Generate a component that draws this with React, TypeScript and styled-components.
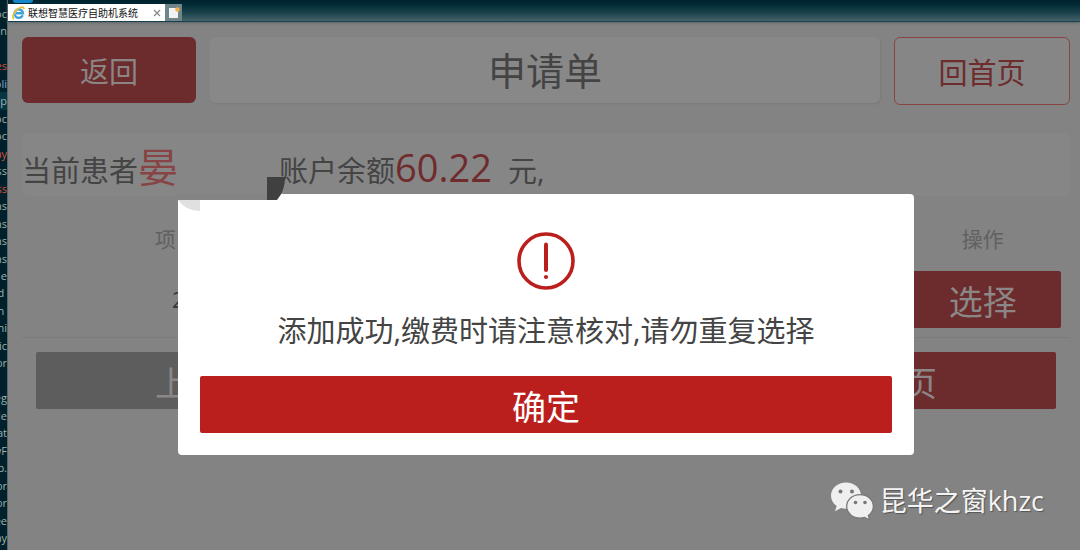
import React from 'react';
import styled, { createGlobalStyle } from 'styled-components';

const GlobalStyle = createGlobalStyle`
  *, *::before, *::after { box-sizing: border-box; }
  body {
    margin: 0;
    background: #002b36;
    font-family: "Open Sans", "Noto Sans CJK SC", sans-serif;
  }
  button { font: inherit; border: 0; padding: 0; cursor: pointer; }
`;

const Desktop = styled.div`
  display: grid;
  grid-template-columns: 7px minmax(0, 1fr);
  height: 100vh;
  overflow: hidden;
`;

const EditorStrip = styled.aside`
  display: flex;
  flex-direction: column;
  padding: 5px 0 3px;
  background: #00212b;
  overflow: hidden;
`;

const CodeLine = styled.div<{ $tone: string; $active: boolean }>`
  flex: 1;
  display: flex;
  align-items: center;
  justify-content: flex-end;
  font-size: 11px;
  line-height: 12px;
  white-space: pre;
  color: ${(p) => p.$tone};
  background: ${(p) => (p.$active ? '#063642' : 'transparent')};
`;

const Browser = styled.div`
  position: relative;
  display: flex;
  flex-direction: column;
  min-width: 0;
  background: #838383;
  border-left: 1px solid #56696d;
`;

const TabBar = styled.header`
  position: relative;
  display: flex;
  align-items: stretch;
  height: 22px;
  padding-top: 4px;
  background: linear-gradient(#00222c 0, #012c37 5px, #1d434d 13px, #44626a 21px);
  border-bottom: 1px solid #16414c;
  box-shadow: 0 1px 3px #5c6668;
`;

const TaskDot = styled.span`
  position: absolute;
  left: 5px;
  top: 0;
  width: 20px;
  height: 3px;
  border-radius: 0 0 8px 8px;
  background: #1387c9;
`;

const Tab = styled.div`
  display: flex;
  align-items: center;
  width: 157px;
  padding: 0 4px;
  background: #fff;
`;

const TabTitle = styled.span`
  flex: 1;
  padding-left: 3px;
  font-size: 10px;
  line-height: 16px;
  color: #111;
  white-space: nowrap;
`;

const TabIconButton = styled.button`
  display: grid;
  place-items: center;
  width: 8px;
  background: none;
`;

const NewTab = styled.button`
  display: grid;
  place-items: center;
  width: 17px;
  background: #70858a;
`;

const Page = styled.main`
  flex: 1;
  padding: 15px 10px 0 14px;
`;

const TopRow = styled.div`
  display: grid;
  grid-template-columns: 174px minmax(0, 1fr) 176px;
  column-gap: 14px;
  align-items: start;
`;

const ActionButton = styled.button<{ $outline?: boolean }>`
  height: ${(p) => (p.$outline ? 68 : 66)}px;
  padding-top: 4px;
  border-radius: 6px;
  font-size: 29px;
  line-height: 40px;
  color: ${(p) => (p.$outline ? '#6e2c2c' : '#8b8585')};
  background: ${(p) => (p.$outline ? '#868686' : '#6c2c2d')};
  border: ${(p) => (p.$outline ? '1px solid #8a4444' : '0')};
`;

const Title = styled.h1`
  margin: 0;
  height: 66px;
  border-radius: 6px;
  background: #888;
  box-shadow: 1px 1px 2px #7a7a7a;
  font-size: 38px;
  line-height: 66px;
  font-weight: 400;
  text-align: center;
  color: #444;
`;

const PatientBar = styled.section`
  display: flex;
  align-items: baseline;
  height: 63px;
  margin-top: 28px;
  border-radius: 6px;
  background: #868686;
  font-size: 29px;
  line-height: 68px;
  color: #444;
  white-space: nowrap;
`;

const PatientName = styled.span`
  width: 141px;
  font-size: 40px;
  color: #864444;
`;

const Balance = styled.span`
  padding-right: 16px;
  font-size: 38px;
  color: #702b2c;
`;

const Items = styled.table`
  width: 100%;
  margin-top: 21px;
  table-layout: fixed;
  border-collapse: collapse;
  border-bottom: 1px solid #7b7b7b;
`;

const HeadCell = styled.th<{ $span: string }>`
  width: ${(p) => p.$span};
  height: 44px;
  padding: 0;
  font-size: 21px;
  line-height: 28px;
  font-weight: 400;
  color: #616161;
`;

const Cell = styled.td<{ $inset: string }>`
  height: 76px;
  padding: 2px ${(p) => p.$inset} 0;
  font-size: 21px;
  line-height: 28px;
  color: #383838;
`;

const BlockButton = styled.button<{ $tone: 'dim' | 'grey' | 'bright' }>`
  display: block;
  width: 100%;
  height: 57px;
  padding-top: 6px;
  border-radius: 2px;
  font-size: 34px;
  line-height: 51px;
  color: ${(p) => (p.$tone === 'bright' ? '#fff' : '#8b8787')};
  background: ${(p) => ({ dim: '#6c2c2d', grey: '#5d5d5d', bright: '#bb1f1d' })[p.$tone]};
`;

const Pager = styled.nav`
  display: grid;
  grid-template-columns: repeat(3, minmax(0, 1fr));
  padding: 14px;

  & > :last-child { grid-column: 3; }
`;

const DialogLayer = styled.div`
  position: absolute;
  inset: 0;
  display: flex;
  justify-content: center;
  align-items: flex-start;
  padding: 194px 10px 0 14px;
`;

const Dialog = styled.div`
  position: relative;
  display: flex;
  flex-direction: column;
  align-items: center;
  width: 736px;
  max-width: 100%;
  padding: 38px 22px 22px;
  border-radius: 4px;
  background: #fff;
`;

const Message = styled.p`
  margin: 21px 0 25px;
  font-size: 29px;
  line-height: 40px;
  color: #444;
  white-space: nowrap;
`;

const Redaction = styled.svg`
  position: absolute;
  left: 0;
  top: -17px;
`;

const Watermark = styled.div`
  position: absolute;
  right: 36px;
  bottom: 29px;
  display: flex;
  align-items: center;
  gap: 6px;
  font-size: 27px;
  line-height: 40px;
  color: #f4f4f4;
  text-shadow: 1px 1px 1px #555;
`;

const PLAIN = '#9fb0b0';
const RED = '#d0503f';
const BLUE = '#8aa6cf';

const codeLines: [string, string?][] = [
  ['oc'], ['on'], [''], ['es', RED], ['oli', BLUE], ['op'], ['oc'], ['oc'],
  ['ay', RED], ['ss'], ['ss', RED], ['ns'], ['ns'], ['ns'], ['ns'], ['e'],
  ['d '], ['h '], ['hi'], ['ic'], ['or'], [''], ['eg'], ['de'], ['at'],
  ['wF'], ['p.'], ['or'], ['or'], ['ee'], ['ay'],
];

const ExplorerIcon = () => (
  <svg width="13" height="14" viewBox="0 0 13 14" aria-hidden="true">
    <path d="M10.7 9.200A4.300 4.300 0 1 1 11 7.300H4" fill="none" stroke="#3fa3dc" strokeWidth="2.400" />
    <path d="M1.500 12.600C-.4 10.500 2.500 5 6.500 2.600 9.300.9 11.600.6 11.900 2.600" fill="none" stroke="#efc036" strokeWidth="1.700" strokeLinecap="round" />
  </svg>
);

const CloseIcon = () => (
  <svg width="8" height="8" viewBox="0 0 8 8" aria-hidden="true">
    <path d="M1 1l6 6M7 1L1 7" stroke="#8a8a8a" strokeWidth="1.300" />
  </svg>
);

const NewTabIcon = () => (
  <svg width="12" height="12" viewBox="0 0 12 12" aria-hidden="true">
    <path d="M1 1h7l2 2v8H1z" fill="#f2f2f2" />
    <circle cx="9.500" cy="2.500" r="2.300" fill="#efb04a" />
  </svg>
);

const AlertIcon = () => (
  <svg width="58" height="58" viewBox="0 0 58 58" aria-hidden="true">
    <circle cx="29" cy="29" r="27" fill="none" stroke="#bb1f1d" strokeWidth="3.600" />
    <path d="M29 12.500v25.500" stroke="#bb1f1d" strokeWidth="4" strokeLinecap="round" />
    <circle cx="29" cy="45" r="2.100" fill="#bb1f1d" />
  </svg>
);

const WeChatIcon = () => (
  <svg width="44" height="40" viewBox="0 0 44 40" aria-hidden="true">
    <path d="M16 1.500C7.700 1.500 1 7.400 1 14.700c0 4.200 2.200 7.800 5.700 10.200L5 30.200l6-3.200c1.600.5 3.300.8 5 .8 8.300 0 15-5.800 15-13.100S24.300 1.500 16 1.500z" fill="#efefef" />
    <path d="M30 13.600c-7.500 0-13.300 5.200-13.300 11.800S22.500 37 30 37c1.600 0 3.200-.3 4.600-.7l5 2.700-1.300-4.600c3-2.100 5-5.300 5-9 0-6.600-5.800-11.800-13.300-11.800z" fill="#efefef" stroke="#777" strokeWidth="1.200" />
    <circle cx="10.500" cy="10.500" r="2" fill="#777" />
    <circle cx="22" cy="10.500" r="2" fill="#777" />
    <circle cx="25.500" cy="21.500" r="1.800" fill="#777" />
    <circle cx="35" cy="21.500" r="1.800" fill="#777" />
  </svg>
);

export default function App() {
  return (
    <>
      <GlobalStyle />
      <Desktop>
        <EditorStrip>
          {codeLines.map(([text, tone], i) => (
            <CodeLine key={i} $tone={tone ?? PLAIN} $active={i === 5}>{text}</CodeLine>
          ))}
        </EditorStrip>
        <Browser>
          <TabBar>
            <TaskDot />
            <Tab>
              <ExplorerIcon />
              <TabTitle>联想智慧医疗自助机系统</TabTitle>
              <TabIconButton aria-label="关闭"><CloseIcon /></TabIconButton>
            </Tab>
            <NewTab aria-label="新标签页"><NewTabIcon /></NewTab>
          </TabBar>
          <Page>
            <TopRow>
              <ActionButton>返回</ActionButton>
              <Title>申请单</Title>
              <ActionButton $outline>回首页</ActionButton>
            </TopRow>
            <PatientBar>
              <span>当前患者</span>
              <PatientName>晏</PatientName>
              <span>账户余额</span>
              <Balance>60.22</Balance>
              <span>元,</span>
            </PatientBar>
            <Items>
              <thead>
                <tr>
                  <HeadCell $span="33.333%">项目名称</HeadCell>
                  <HeadCell $span="50%" />
                  <HeadCell $span="16.667%">操作</HeadCell>
                </tr>
              </thead>
              <tbody>
                <tr>
                  <Cell $inset="150px">2</Cell>
                  <Cell $inset="0" />
                  <Cell $inset="9px"><BlockButton $tone="dim">选择</BlockButton></Cell>
                </tr>
              </tbody>
            </Items>
            <Pager>
              <BlockButton $tone="grey">上一页</BlockButton>
              <BlockButton $tone="dim">下一页</BlockButton>
            </Pager>
          </Page>
          <DialogLayer>
            <Dialog role="alertdialog" aria-labelledby="message">
              <Redaction width="108" height="36" viewBox="0 0 108 36" aria-hidden="true">
                <path d="M0 17H90V23H0z" fill="#838383" />
                <path d="M89 0H107Q107 14 99 23H89z" fill="#404040" />
                <path d="M0 23H22V34Q8 34 0 23z" fill="#e0e0e0" />
              </Redaction>
              <AlertIcon />
              <Message id="message">添加成功,缴费时请注意核对,请勿重复选择</Message>
              <BlockButton $tone="bright">确定</BlockButton>
            </Dialog>
          </DialogLayer>
          <Watermark>
            <WeChatIcon />
            <span>昆华之窗khzc</span>
          </Watermark>
        </Browser>
      </Desktop>
    </>
  );
}
